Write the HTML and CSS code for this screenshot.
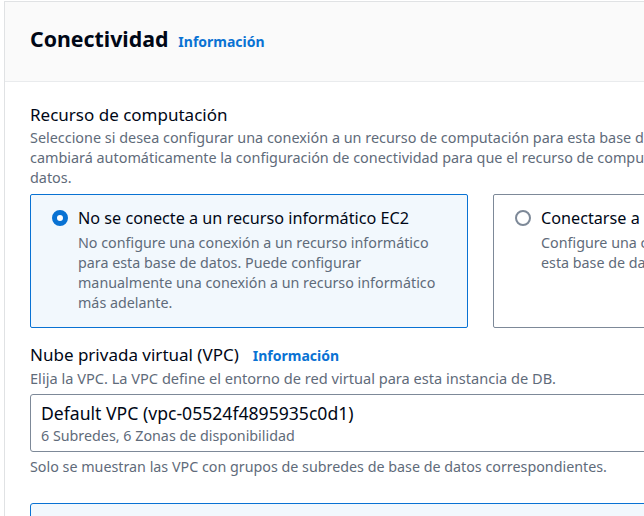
FILE: index.html
```html
<!DOCTYPE html>
<html lang="es">
<head>
<meta charset="utf-8">
<title>Conectividad</title>
<link rel="stylesheet" href="styles.css">
</head>
<body>
<div class="page">
  <section class="container">
    <header class="container-header">
      <h2 class="title">Conectividad</h2>
      <a class="info-link" href="#">Información</a>
    </header>
    <div class="container-body">
      <div class="field">
        <div class="label">Recurso de computación</div>
        <p class="desc desc-wide">Seleccione si desea configurar una conexión a un recurso de computación para esta base de datos. Si configura una conexión, se cambiará automáticamente la configuración de conectividad para que el recurso de computación pueda conectarse a esta base de datos.</p>
        <div class="tiles">
          <label class="tile tile-selected">
            <span class="radio radio-checked"></span>
            <span class="tile-text">
              <span class="tile-label">No se conecte a un recurso informático EC2</span>
              <span class="tile-desc">No configure una conexión a un recurso informático para esta base de datos. Puede configurar manualmente una conexión a un recurso informático más adelante.</span>
            </span>
          </label>
          <label class="tile">
            <span class="radio"></span>
            <span class="tile-text">
              <span class="tile-label">Conectarse a un recurso informático EC2</span>
              <span class="tile-desc">Configure una conexión a un recurso informático para esta base de datos.</span>
            </span>
          </label>
        </div>
      </div>

      <div class="field field-vpc">
        <div class="label-row">
          <span class="label">Nube privada virtual (VPC)</span>
          <a class="info-link" href="#">Información</a>
        </div>
        <p class="desc desc-vpc">Elija la VPC. La VPC define el entorno de red virtual para esta instancia de DB.</p>
        <div class="select">
          <div class="select-value">Default VPC (vpc-05524f4895935c0d1)</div>
          <div class="select-sub">6 Subredes, 6 Zonas de disponibilidad</div>
        </div>
        <p class="hint">Solo se muestran las VPC con grupos de subredes de base de datos correspondientes.</p>
      </div>

      <div class="alert"></div>
    </div>
  </section>
</div>
</body>
</html>
```

FILE: styles.css
```css
html, body {
  margin: 0;
  padding: 0;
  overflow: hidden;
  background: #ffffff;
}

body {
  font-family: "Noto Sans", "Open Sans", sans-serif;
  color: #000716;
  width: 644px;
  height: 516px;
}

.page {
  padding: 1px 0 0 4px;
}

.container {
  width: 951px;
  border-top: 1px solid #e0e2e4;
  border-left: 1px solid #e0e2e4;
  background: #ffffff;
}

.container-header {
  display: flex;
  align-items: baseline;
  gap: 10px;
  background: #fafafa;
  border-bottom: 1px solid #e9ebed;
  padding: 22px 25px 27px;
  height: 30px;
}

.title {
  margin: 0;
  font-size: 21.3px;
  line-height: 30px;
  font-weight: 700;
  color: #000716;
}

.info-link {
  font-size: 14px;
  font-weight: 700;
  color: #0972d3;
  text-decoration: none;
}

.container-body {
  padding: 22px 25px 0;
}

.label {
  font-size: 17px;
  line-height: 22px;
  color: #000716;
}

.label-row {
  display: flex;
  align-items: baseline;
  gap: 14px;
}

.desc,
.hint {
  margin: 2px 0 0;
  font-size: 14.4px;
  line-height: 20px;
  color: #5f6b7a;
}

.desc-wide {
  max-width: 890px;
}

.desc-vpc {
  font-size: 14.6px;
}

.tiles {
  display: grid;
  grid-template-columns: 438px 438px;
  gap: 25px;
  margin-top: 6px;
}

.tile {
  display: flex;
  gap: 10px;
  padding: 12px 21px 14px;
  border: 1px solid #7d8998;
  border-radius: 2px;
  background: #ffffff;
}

.tile-selected {
  border-color: #0972d3;
  background: #f2f8fd;
}

.radio {
  flex: none;
  box-sizing: border-box;
  width: 16px;
  height: 16px;
  margin-top: 3px;
  border-radius: 50%;
  border: 2px solid #7d8998;
  background: #ffffff;
}

.radio-checked {
  border: 5px solid #0972d3;
}

.tile-text {
  display: flex;
  flex-direction: column;
  gap: 4px;
}

.tile-label {
  font-size: 16.2px;
  line-height: 22px;
  color: #000716;
}

.tile-desc {
  font-size: 14.3px;
  line-height: 20px;
  color: #5f6b7a;
}

.field-vpc {
  margin-top: 16px;
}

.select {
  margin-top: 6px;
  padding: 7px 10px 5px;
  border: 1px solid #7d8998;
  border-radius: 3px;
}

.select-value {
  font-size: 17.6px;
  line-height: 22px;
  color: #000716;
}

.select-sub {
  margin-top: 2px;
  font-size: 14.3px;
  line-height: 20px;
  color: #5f6b7a;
}

.hint {
  margin-top: 5px;
  font-size: 14.3px;
}

.alert {
  margin-top: 26px;
  height: 60px;
  border: 1px solid #0972d3;
  border-radius: 3px;
  background: #f2f8fd;
}
```
